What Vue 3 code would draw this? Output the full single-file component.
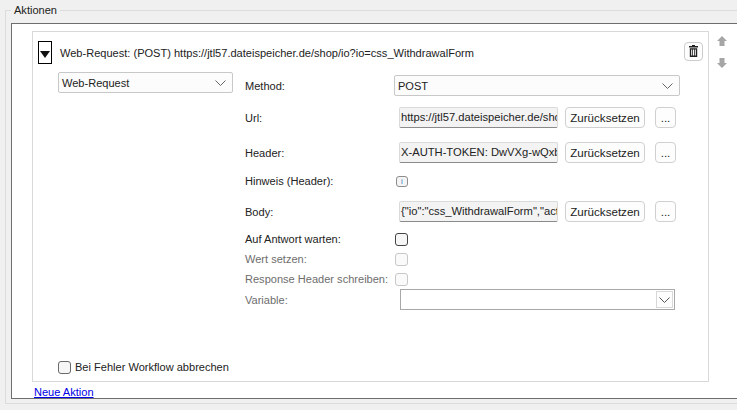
<script setup>
const title = 'Web-Request: (POST) https://jtl57.dateispeicher.de/shop/io?io=css_WithdrawalForm'
const url = 'https://jtl57.dateispeicher.de/shop/io?io=css_WithdrawalForm'
const header = 'X-AUTH-TOKEN: DwVXg-wQxb-9fK2'
const body = '{"io":"css_WithdrawalForm","action":"submit"}'
</script>

<template>
  <div class="page">
    <fieldset class="group">
      <legend>Aktionen</legend>
      <div class="panel">
        <div class="top">
          <section class="card">
            <div class="head">
              <button class="toggle" aria-label="Einklappen"><span class="tri"></span></button>
              <span class="title">{{ title }}</span>
              <button class="trash" aria-label="Löschen">
                <svg width="9" height="12" viewBox="0 0 9 12"><path d="M3 0h3v1h3v1.500H0V1h3zM.8 3.200h7.400V12H.8zM2.200 4.500v6h1v-6zM4 4.500v6h1v-6zM5.800 4.500v6h1v-6z" fill="#222" fill-rule="evenodd"/></svg>
              </button>
            </div>
            <div class="body">
              <div class="left">
                <div class="type-select">
                  <span>Web-Request</span>
                  <svg width="11" height="6" viewBox="0 0 11 6"><path d="M.5.500l5 5 5-5" fill="none" stroke="#666"/></svg>
                </div>
              </div>
              <div class="form">
                <div class="row r-method">
                  <label>Method:</label>
                  <div class="method-select">
                    <span>POST</span>
                    <svg width="11" height="6" viewBox="0 0 11 6"><path d="M.5.500l5 5 5-5" fill="none" stroke="#666"/></svg>
                  </div>
                </div>
                <div class="row r-url">
                  <label>Url:</label>
                  <div class="field"><span>{{ url }}</span></div>
                  <button class="btn reset">Zurücksetzen</button>
                  <button class="btn more">...</button>
                </div>
                <div class="row r-header">
                  <label>Header:</label>
                  <div class="field"><span>{{ header }}</span></div>
                  <button class="btn reset">Zurücksetzen</button>
                  <button class="btn more">...</button>
                </div>
                <div class="row r-hint">
                  <label>Hinweis (Header):</label>
                  <span class="info">i</span>
                </div>
                <div class="row r-body">
                  <label>Body:</label>
                  <div class="field"><span>{{ body }}</span></div>
                  <button class="btn reset">Zurücksetzen</button>
                  <button class="btn more">...</button>
                </div>
                <div class="row r-check first">
                  <label>Auf Antwort warten:</label>
                  <span class="check"></span>
                </div>
                <div class="row r-check dis">
                  <label>Wert setzen:</label>
                  <span class="check off"></span>
                </div>
                <div class="row r-check dis">
                  <label>Response Header schreiben:</label>
                  <span class="check off"></span>
                </div>
                <div class="row r-var dis">
                  <label>Variable:</label>
                  <div class="var-combo">
                    <span class="var-btn">
                      <svg width="11" height="6" viewBox="0 0 11 6"><path d="M.5.500l5 5 5-5" fill="none" stroke="#555"/></svg>
                    </span>
                  </div>
                </div>
              </div>
            </div>
            <div class="abort">
              <span class="check"></span>
              <span>Bei Fehler Workflow abbrechen</span>
            </div>
          </section>
          <div class="side">
            <svg width="10" height="10" viewBox="0 0 10 10"><path d="M5 0l5 5H7.500v5h-5V5H0z" fill="#a6a6a6"/></svg>
            <svg width="10" height="10" viewBox="0 0 10 10"><path d="M5 10l5-5H7.500V0h-5v5H0z" fill="#a6a6a6"/></svg>
          </div>
        </div>
        <a class="new" href="#">Neue Aktion</a>
      </div>
    </fieldset>
  </div>
</template>

<style>
html, body { margin: 0; background: #f0f0f0; overflow: hidden; }
</style>

<style scoped>
.page {
  width: 737px; height: 410px; box-sizing: border-box;
  padding: 2px 0 0 5px; overflow: hidden; background: #f0f0f0;
  font: 11.05px "Liberation Sans", Arial, sans-serif; color: #222;
}
.group {
  margin: 0; padding: 5px 0 4px 5px; box-sizing: border-box;
  width: 740px; height: 402px; border: 1px solid #dcdcdc;
}
legend { padding: 0 3px; margin-left: 0; line-height: 16px; color: #222; }
.panel {
  box-sizing: border-box; width: 740px; height: 376px;
  background: #fff; border: 1px solid #6e6e6e; border-width: 1px 0 1px 1px;
  padding: 7px 0 0 20px;
}
.top { display: flex; align-items: flex-start; }
.card {
  box-sizing: border-box; width: 677px; height: 351px;
  display: flex; flex-direction: column;
  border: 1px solid #d9d9d9; padding: 9px 0 0 5px;
}
.head { display: flex; align-items: center; height: 23px; }
.toggle {
  width: 14px; height: 23px; box-sizing: border-box; padding: 0; background: #fff;
  border: 1px solid #000; display: flex; align-items: center; justify-content: center;
}
.tri { border: 5.500px solid transparent; border-top: 7px solid #111; border-bottom: 0; margin-top: 3px; }
.title { margin-left: 8px; white-space: nowrap; flex: 1; }
.trash {
  width: 19px; height: 19px; box-sizing: border-box; margin: -3px 5px 0 0; padding: 0;
  background: #fdfdfd; border: 1px solid #ccc; border-radius: 4px;
  display: flex; align-items: center; justify-content: center;
}
.body { display: flex; margin-top: 8px; }
.left { width: 207px; padding-left: 20px; box-sizing: border-box; }
.type-select, .method-select {
  box-sizing: border-box; height: 21px; display: flex; align-items: center; justify-content: space-between;
  border: 1px solid #c8c8c8; border-radius: 2px; background: #fcfcfc; padding: 0 6px 0 3px;
}
.type-select { width: 175px; }
.form { flex: 1; padding-top: 3px; }
.row { display: flex; align-items: center; }
.row label { width: 149px; flex: none; white-space: nowrap; }
.method-select { width: 286px; }
.r-method { height: 21px; }
.r-url { height: 21px; margin-top: 11px; }
.r-header { height: 21px; margin-top: 14px; }
.r-hint { height: 16px; margin-top: 10px; }
.r-body { height: 21px; margin-top: 12px; }
.r-check { height: 20px; }
.r-check.first { margin-top: 7px; }
.field {
  box-sizing: border-box; width: 159px; height: 21px; margin-left: 5px; padding: 0 1px;
  font-size: 11.2px;
  background: #f3f3f3; border: 1px solid #dadada; border-bottom-color: #8a8a8a; border-radius: 2px;
  overflow: hidden; white-space: nowrap; line-height: 19px;
}
.btn {
  font: inherit; font-size: 11.6px; color: #222; background: #fdfdfd; padding: 0; height: 21px; box-sizing: border-box;
  border: 1px solid #d0d0d0; border-radius: 4px; flex: none;
}
.reset { width: 80px; margin-left: 7px; }
.more { width: 21px; margin-left: 10px; }
.info {
  box-sizing: border-box; width: 12px; height: 11px; margin-left: 2px;
  border: 1px solid #8d8d8d; border-radius: 3px; background: #f4f4f4;
  color: #3c7fc4; font-size: 8px; line-height: 9px; text-align: center;
}
.check {
  display: inline-block; box-sizing: border-box; width: 13px; height: 13px; margin-left: 1px;
  border: 1px solid #444; border-radius: 3px; background: #f6f6f6;
}
.check.off { border-color: #c8c8c8; background: #fafafa; }
.dis label { color: #6d6d6d; }
.r-var { height: 21px; }
.var-combo {
  box-sizing: border-box; width: 275px; height: 21px; margin-left: 6px;
  border: 1px solid #a8a8a8; background: #fff; display: flex; justify-content: flex-end; padding: 1px;
}
.var-btn {
  box-sizing: border-box; width: 17px; border: 1px solid #d8d8d8; background: #fdfdfd;
  display: flex; align-items: center; justify-content: center;
}
.abort {
  margin: auto 0 6px 20px; height: 16px;
  display: flex; align-items: center; gap: 4px;
}
.abort .check { margin-left: 0; border-color: #6a6a6a; }
.side { margin: 5px 0 0 8px; display: flex; flex-direction: column; gap: 12px; }
.new { display: block; width: max-content; margin: 3px 0 0 2px; color: #0000e6; line-height: 14px; }
</style>
